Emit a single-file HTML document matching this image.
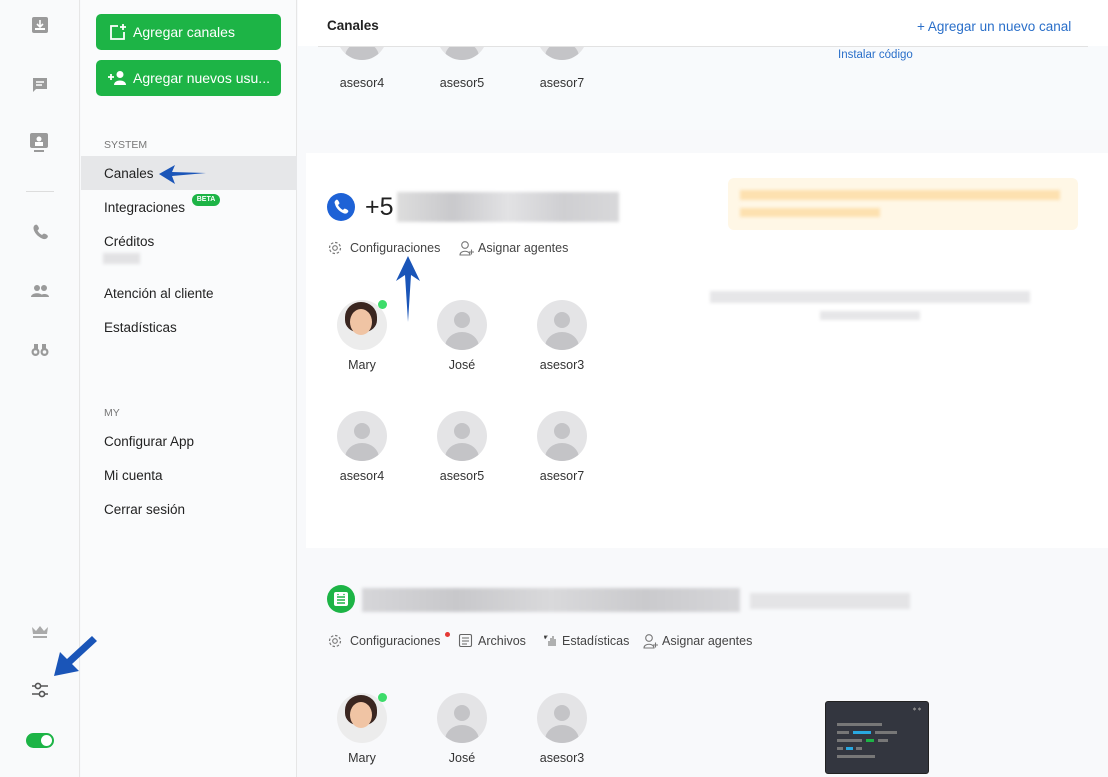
<!DOCTYPE html>
<html><head><meta charset="utf-8"><style>
*{margin:0;padding:0;box-sizing:border-box}
body{width:1108px;height:777px;overflow:hidden;font-family:"Liberation Sans",sans-serif;background:#f8f9fb;position:relative;color:#222}
.a{position:absolute}
.rail{left:0;top:0;width:80px;height:777px;background:#f9fafb;border-right:1px solid #e6e6e6}
.side{left:81px;top:0;width:216px;height:777px;background:#fafbfc;border-right:1px solid #e6e6e6}
.btn{position:absolute;left:15px;width:185px;height:36px;background:#1db446;border-radius:5px;color:#fff;font-size:14px;line-height:36px;padding-left:37px}
.it{position:absolute;left:23px;font-size:13.5px;color:#222}
.sec{position:absolute;left:23px;font-size:10.5px;color:#777}
.av{position:absolute;width:50px;height:50px;border-radius:50%;background:#e4e4e6;overflow:hidden}
.av::before{content:"";position:absolute;left:17px;top:12px;width:16px;height:16px;border-radius:50%;background:#c4c4c7}
.av::after{content:"";position:absolute;left:8px;top:32px;width:34px;height:30px;border-radius:50%;background:#c4c4c7}
.mary{position:absolute;width:50px;height:50px;border-radius:50%;overflow:hidden;background:#ececec}
.mary::before{content:"";position:absolute;left:8px;top:2px;width:32px;height:30px;border-radius:50% 50% 40% 40%;background:#3a2620}
.mary::after{content:"";position:absolute;left:13px;top:9px;width:22px;height:26px;border-radius:50%;background:#f0c4a4}
.dot{position:absolute;width:9px;height:9px;border-radius:50%;background:#3ddc6a}
.nm{position:absolute;width:100px;text-align:center;font-size:12.5px;color:#333}
.lk{position:absolute;font-size:12.5px;color:#444}
.blur{position:absolute;background:#d9d9dc;filter:blur(1.5px)}
</style></head><body>
<div class="a rail">
<svg class="a" style="left:31px;top:16px" width="18" height="18"><rect x="1" y="1" width="16" height="16" rx="2" fill="#9a9a9a"/><path d="M9 4v6M6 8l3 3 3-3" stroke="#fff" stroke-width="1.6" fill="none"/><rect x="4" y="12" width="10" height="2" fill="#fff"/></svg>
<svg class="a" style="left:32px;top:77px" width="16" height="16"><path d="M1 1h14v11H4l-3 3z" fill="#9a9a9a"/><path d="M4 5h8M4 8h6" stroke="#fff" stroke-width="1.4"/></svg>
<svg class="a" style="left:29px;top:133px" width="20" height="22"><rect x="1" y="0" width="18" height="15" rx="2" fill="#9a9a9a"/><circle cx="10" cy="6" r="2.5" fill="#fff"/><rect x="6" y="9" width="8" height="4" fill="#fff"/><rect x="5" y="17" width="10" height="2" fill="#9a9a9a"/></svg>
<div class="a" style="left:26px;top:191px;width:28px;height:1px;background:#ddd"></div>
<svg class="a" style="left:32px;top:224px" width="16" height="16"><path d="M3 1c1.5-1 2.5 0 3.5 2s0 2.5-1 3.5c1 2 2.5 3.5 4.5 4.5 1-1 1.5-2 3.5-1s3 2 2 3.5c-1.5 2-3.5 2-5.5 1C6 12.5 3.5 10 2 6.5 1 4 1.5 2 3 1z" fill="#9a9a9a"/></svg>
<svg class="a" style="left:30px;top:284px" width="20" height="14"><circle cx="7" cy="4" r="3" fill="#9a9a9a"/><circle cx="14" cy="4" r="3" fill="#9a9a9a"/><path d="M1 13c0-5 12-5 12 0zM10 13c0-4 9-4 9 0z" fill="#9a9a9a"/></svg>
<svg class="a" style="left:31px;top:343px" width="18" height="14"><circle cx="4.5" cy="9" r="4" fill="#9a9a9a"/><circle cx="13.5" cy="9" r="4" fill="#9a9a9a"/><rect x="3" y="1" width="4" height="6" fill="#9a9a9a"/><rect x="11" y="1" width="4" height="6" fill="#9a9a9a"/><circle cx="4.5" cy="9" r="1.8" fill="#f9fafb"/><circle cx="13.5" cy="9" r="1.8" fill="#f9fafb"/></svg>
<svg class="a" style="left:31px;top:625px" width="18" height="13"><path d="M1 2l4 4 4-5 4 5 4-4-1 7H2z" fill="#aaa"/><rect x="2" y="11" width="14" height="2" fill="#aaa"/></svg>
<svg class="a" style="left:31px;top:682px" width="18" height="16"><path d="M1 4h16M1 12h16" stroke="#555" stroke-width="1.6"/><circle cx="7" cy="4" r="2.6" fill="#f9fafb" stroke="#555" stroke-width="1.6"/><circle cx="11" cy="12" r="2.6" fill="#f9fafb" stroke="#555" stroke-width="1.6"/></svg>
<div class="a" style="left:26px;top:733px;width:28px;height:15px;border-radius:8px;background:#1db446"><div class="a" style="right:2px;top:2px;width:11px;height:11px;border-radius:50%;background:#fff"></div></div>
</div>
<div class="a side">
<div class="btn" style="top:14px">Agregar canales<svg class="a" style="left:13px;top:9px" width="18" height="18"><path d="M9 3H2v13h13V9" stroke="#fff" stroke-width="1.8" fill="none"/><path d="M14 1v6M11 4h6" stroke="#fff" stroke-width="1.8"/></svg></div>
<div class="btn" style="top:60px">Agregar nuevos usu...<svg class="a" style="left:11px;top:10px" width="20" height="16"><path d="M1 7h6M4 4v6" stroke="#fff" stroke-width="1.8"/><circle cx="13" cy="4.5" r="3.5" fill="#fff"/><path d="M7 15c0-6 12-6 12 0z" fill="#fff"/></svg></div>
<div class="sec" style="top:139px">SYSTEM</div>
<div class="a" style="left:0;top:156px;width:216px;height:34px;background:#e6e7e9"></div>
<div class="it" style="top:166px">Canales</div>
<svg class="a" style="left:77px;top:163px" width="50" height="22"><path d="M1 11L17 2l-3 7 34 1-34 3 3 8z" fill="#1a55b8"/></svg>
<div class="it" style="top:200px">Integraciones</div>
<div class="a" style="left:111px;top:194px;width:28px;height:12px;border-radius:6px;background:#1db446;color:#fff;font-size:7px;font-weight:bold;text-align:center;line-height:12px">BETA</div>
<div class="it" style="top:234px">Créditos</div>
<div class="blur" style="left:22px;top:253px;width:37px;height:11px;background:#e2e2e4"></div>
<div class="it" style="top:286px">Atención al cliente</div>
<div class="it" style="top:320px">Estadísticas</div>
<div class="sec" style="top:407px">MY</div>
<div class="it" style="top:434px">Configurar App</div>
<div class="it" style="top:468px">Mi cuenta</div>
<div class="it" style="top:502px">Cerrar sesión</div>
</div>
<svg class="a" style="left:52px;top:634px;z-index:5" width="46" height="44"><path d="M2 42L8 18L15 25L40 2L45 7L20 30L27 37Z" fill="#1a55b8"/></svg>

<div class="a" style="left:298px;top:0;width:810px;height:130px;background:#f8fafc"></div>
<div class="av" style="left:337px;top:10px"></div><div class="av" style="left:437px;top:10px"></div><div class="av" style="left:537px;top:10px"></div>
<div class="nm" style="left:312px;top:76px">asesor4</div><div class="nm" style="left:412px;top:76px">asesor5</div><div class="nm" style="left:512px;top:76px">asesor7</div>
<div class="a" style="left:838px;top:49px;font-size:11.5px;color:#2a6fc9">Instalar código</div>
<div class="a" style="left:298px;top:0;width:810px;height:46px;background:#fff"></div>
<div class="a" style="left:318px;top:46px;width:770px;height:1px;background:#e2e2e2"></div>
<div class="a" style="left:327px;top:18px;font-size:13.5px;font-weight:bold;color:#222">Canales</div>
<div class="a" style="left:917px;top:19px;font-size:13.5px;color:#2a6fc9">+ Agregar un nuevo canal</div>

<div class="a" style="left:306px;top:153px;width:802px;height:395px;background:#fff"></div>
<svg class="a" style="left:327px;top:193px" width="28" height="28"><circle cx="14" cy="14" r="14" fill="#1e62d6"/><path d="M9 7c1-1 2 0 3 2s0 2-1 3c1 2 3 4 5 5 1-1 1-2 3-1s3 2 2 3c-1 2-3 2-5 1-4-2-7-5-8-9-1-2 0-3 1-4z" fill="#fff"/></svg>
<div class="a" style="left:365px;top:193px;font-size:25px;color:#222">+5</div>
<div class="blur" style="left:397px;top:192px;width:222px;height:30px;background:linear-gradient(90deg,#ddd,#c9c9cc,#e2e2e4,#cfcfd2,#d8d8da)"></div>
<div class="a" style="left:728px;top:178px;width:350px;height:52px;border-radius:6px;background:#fff7e6"></div>
<div class="blur" style="left:740px;top:190px;width:320px;height:10px;background:#fde1b0"></div>
<div class="blur" style="left:740px;top:208px;width:140px;height:9px;background:#fde1b0"></div>
<svg class="a" style="left:327px;top:240px" width="16" height="16"><circle cx="8" cy="8" r="5.5" fill="none" stroke="#777" stroke-width="1.2" stroke-dasharray="2.5 1.8"/><circle cx="8" cy="8" r="2.3" fill="none" stroke="#777" stroke-width="1.1"/></svg>
<div class="lk" style="left:350px;top:241px">Configuraciones</div>
<svg class="a" style="left:459px;top:240px" width="15" height="16"><circle cx="6" cy="5" r="3.3" fill="none" stroke="#777" stroke-width="1.1"/><path d="M1 15c0-5 10-5 10 0z" fill="none" stroke="#777" stroke-width="1.1"/><path d="M10 12h5M12.5 9.5v5" stroke="#777" stroke-width="1.1"/></svg>
<div class="lk" style="left:478px;top:241px">Asignar agentes</div>
<svg class="a" style="left:393px;top:255px" width="30" height="68"><path d="M15 1L3 26l9-6 3 47 3-47 9 6z" fill="#1a55b8"/></svg>
<div class="mary" style="left:337px;top:300px"></div><div class="dot" style="left:378px;top:300px"></div>
<div class="av" style="left:437px;top:300px"></div><div class="av" style="left:537px;top:300px"></div>
<div class="nm" style="left:312px;top:358px">Mary</div><div class="nm" style="left:412px;top:358px">José</div><div class="nm" style="left:512px;top:358px">asesor3</div>
<div class="av" style="left:337px;top:411px"></div><div class="av" style="left:437px;top:411px"></div><div class="av" style="left:537px;top:411px"></div>
<div class="nm" style="left:312px;top:469px">asesor4</div><div class="nm" style="left:412px;top:469px">asesor5</div><div class="nm" style="left:512px;top:469px">asesor7</div>
<div class="blur" style="left:710px;top:291px;width:320px;height:12px;background:#e6e6e8"></div>
<div class="blur" style="left:820px;top:311px;width:100px;height:9px;background:#e6e6e8"></div>

<svg class="a" style="left:327px;top:585px" width="28" height="28"><circle cx="14" cy="14" r="14" fill="#1db446"/><rect x="7" y="7" width="14" height="14" rx="2" fill="#fff"/><path d="M10 12h8M10 15h8M10 18h8" stroke="#1db446" stroke-width="1.4"/><circle cx="11" cy="9.5" r=".8" fill="#1db446"/><circle cx="17" cy="9.5" r=".8" fill="#1db446"/></svg>
<div class="blur" style="left:362px;top:588px;width:378px;height:24px;background:linear-gradient(90deg,#d6d6d9,#c8c8cb,#d9d9db,#cacacd,#d6d6d9)"></div>
<div class="blur" style="left:750px;top:593px;width:160px;height:16px;background:#e4e4e6"></div>
<svg class="a" style="left:327px;top:633px" width="16" height="16"><circle cx="8" cy="8" r="5.5" fill="none" stroke="#777" stroke-width="1.2" stroke-dasharray="2.5 1.8"/><circle cx="8" cy="8" r="2.3" fill="none" stroke="#777" stroke-width="1.1"/></svg>
<div class="lk" style="left:350px;top:634px">Configuraciones</div>
<div class="a" style="left:445px;top:632px;width:5px;height:5px;border-radius:50%;background:#e53935"></div>
<svg class="a" style="left:458px;top:633px" width="15" height="15"><rect x="1.5" y="1.5" width="12" height="12" rx="1.5" fill="none" stroke="#666" stroke-width="1.1"/><path d="M4 5h7M4 8h7M4 11h5" stroke="#666"/></svg>
<div class="lk" style="left:478px;top:634px">Archivos</div>
<svg class="a" style="left:543px;top:634px" width="14" height="13"><path d="M1 2h3L2 5M6 12V7M8 12V4M10 12V2M12 12V5" stroke="#666" stroke-width="1"/></svg>
<div class="lk" style="left:562px;top:634px">Estadísticas</div>
<svg class="a" style="left:643px;top:633px" width="15" height="16"><circle cx="6" cy="5" r="3.3" fill="none" stroke="#777" stroke-width="1.1"/><path d="M1 15c0-5 10-5 10 0z" fill="none" stroke="#777" stroke-width="1.1"/><path d="M10 12h5M12.5 9.5v5" stroke="#777" stroke-width="1.1"/></svg>
<div class="lk" style="left:662px;top:634px">Asignar agentes</div>
<div class="mary" style="left:337px;top:693px"></div><div class="dot" style="left:378px;top:693px"></div>
<div class="av" style="left:437px;top:693px"></div><div class="av" style="left:537px;top:693px"></div>
<div class="nm" style="left:312px;top:751px">Mary</div><div class="nm" style="left:412px;top:751px">José</div><div class="nm" style="left:512px;top:751px">asesor3</div>
<div class="a" style="left:825px;top:701px;width:104px;height:73px;background:#33363f;border-radius:3px;border:1px solid #222">
<div class="a" style="right:6px;top:5px;width:10px;height:4px;background:radial-gradient(circle,#888 40%,transparent 45%) 0 0/5px 4px"></div>
<div class="a" style="left:11px;top:21px;width:45px;height:3px;background:#777"></div>
<div class="a" style="left:11px;top:29px;width:12px;height:3px;background:#777"></div><div class="a" style="left:27px;top:29px;width:18px;height:3px;background:#29a8e0"></div><div class="a" style="left:49px;top:29px;width:22px;height:3px;background:#777"></div>
<div class="a" style="left:11px;top:37px;width:25px;height:3px;background:#777"></div><div class="a" style="left:40px;top:37px;width:8px;height:3px;background:#1db446"></div><div class="a" style="left:52px;top:37px;width:10px;height:3px;background:#777"></div>
<div class="a" style="left:11px;top:45px;width:6px;height:3px;background:#777"></div><div class="a" style="left:20px;top:45px;width:7px;height:3px;background:#29a8e0"></div><div class="a" style="left:30px;top:45px;width:6px;height:3px;background:#777"></div>
<div class="a" style="left:11px;top:53px;width:38px;height:3px;background:#777"></div>
</div>
</body></html>
